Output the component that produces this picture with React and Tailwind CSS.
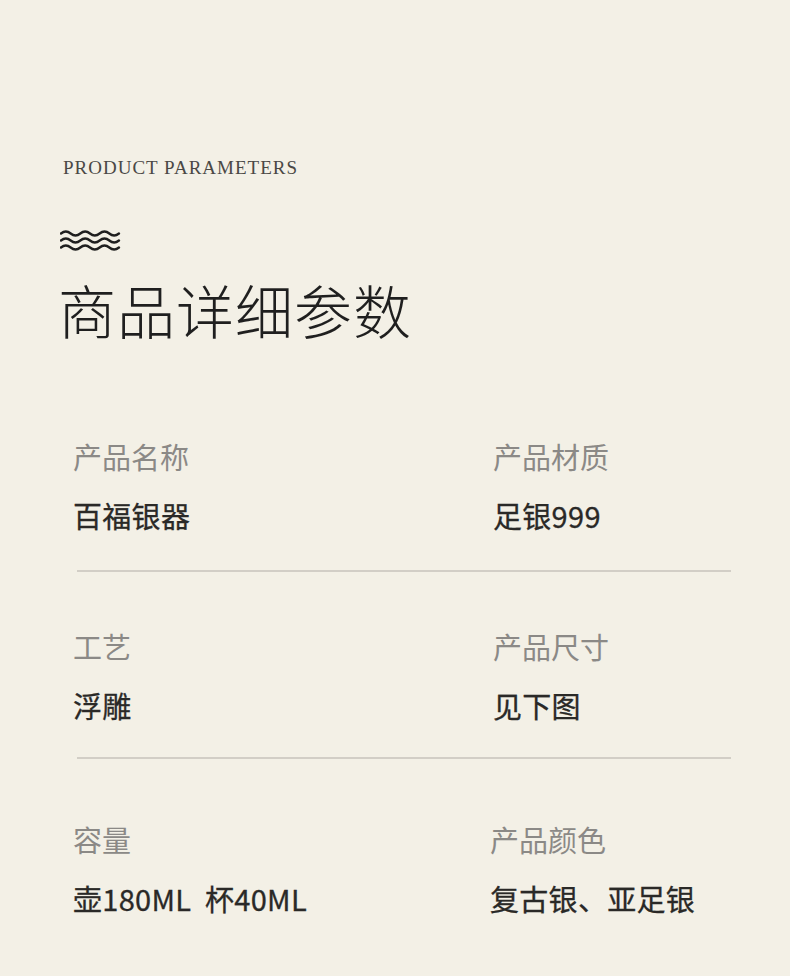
import React from 'react';

const cjk = { fontFamily: '"Noto Sans CJK SC", "Noto Sans", sans-serif' };

const rows = [
    [
        { label: '产品名称', value: '百福银器' },
        { label: '产品材质', value: '足银999' },
    ],
    [
        { label: '工艺', value: '浮雕' },
        { label: '产品尺寸', value: '见下图' },
    ],
    [
        { label: '容量', value: '壶180ML  杯40ML' },
        { label: '产品颜色', value: '复古银、亚足银', shift: true },
    ],
];

const Waves = () => (
    <svg width="61" height="22" viewBox="0 0 61 22" fill="none" stroke="#1f1f1f" strokeWidth="2.4" strokeLinecap="round">
        {[3.5, 10.5, 17.5].map((y) => (
            <path key={y} d={`M1 ${y} q4.83 -4 9.66 0 t9.66 0 t9.66 0 t9.66 0 t9.66 0 t9.66 0`} />
        ))}
    </svg>
);

const Cell = ({ label, value, shift }) => (
    <div className={`flex flex-col ${shift ? '-ml-[3px]' : ''}`}>
        <div className="text-[29px] leading-none text-[#8b8986]" style={cjk}>{label}</div>
        <div className="mt-[30px] text-[29px] leading-none font-normal text-[#2a2927] [-webkit-text-stroke:0.3px_#2a2927] tracking-[0.3px] whitespace-pre" style={cjk}>{value}</div>
    </div>
);

const App = () => {
    return (
        <div className="w-[790px] h-[976px] bg-[#f3f0e6] overflow-hidden">
            <div className="pl-[63px] pt-[158px]">
                <div className="text-[19px] leading-none tracking-[1px] text-[#4a4845]" style={{ fontFamily: '"Liberation Serif", serif' }}>
                    PRODUCT PARAMETERS
                </div>
                <div className="mt-[53px] -ml-[3px]">
                    <Waves />
                </div>
                <div className="mt-[28px] -ml-[5px] text-[58px] leading-none font-light text-[#1f1f1f] tracking-[1px]" style={cjk}>
                    商品详细参数
                </div>
            </div>

            <div className="mt-[104px]">
                {rows.map((row, i) => (
                    <div key={i}>
                        <div className="grid grid-cols-[420px_1fr] pl-[73px]">
                            <Cell {...row[0]} />
                            <Cell {...row[1]} />
                        </div>
                        {i < rows.length - 1 && (
                            <div className={`ml-[77px] w-[654px] h-[2px] bg-[#d2cec6] ${i === 0 ? 'mt-[40px] mb-[60px]' : 'mt-[37px] mb-[66px]'}`} />
                        )}
                    </div>
                ))}
            </div>
        </div>
    );
};

export default App;
